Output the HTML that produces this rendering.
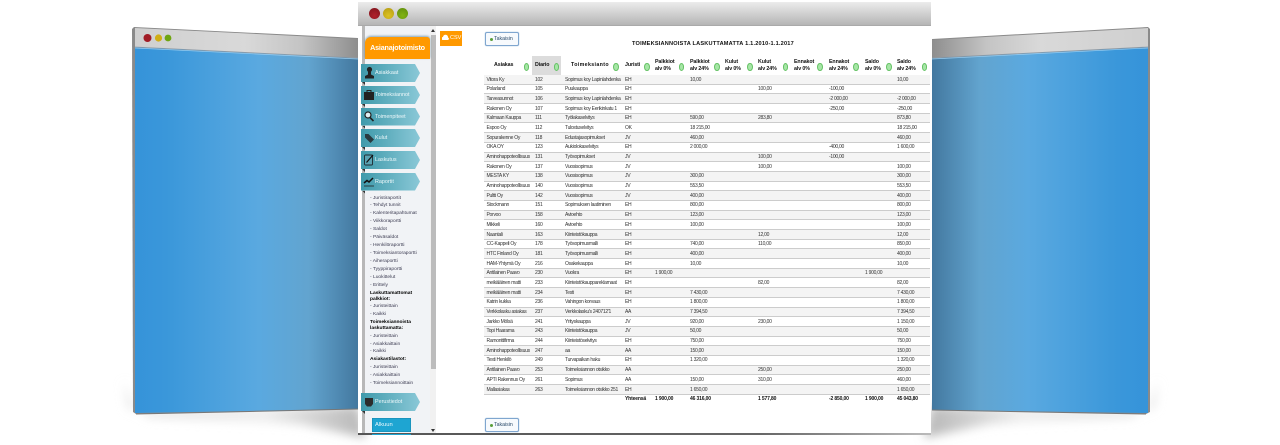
<!DOCTYPE html>
<html><head><meta charset="utf-8"><title>Toimeksiannoista laskuttamatta</title>
<style>
html,body{margin:0;padding:0;background:#fff}
#p{position:relative;width:1280px;height:445px;overflow:hidden;background:#fff;font-family:"Liberation Sans",sans-serif;color:#333}
#bg{position:absolute;left:0;top:0}
.abs{position:absolute}
#main{position:absolute;left:358px;top:2px;width:573px;height:431px;background:#fff}
#head{position:absolute;left:358px;top:2px;width:573px;height:23px;background:linear-gradient(#ececec,#b5b5b5);border-bottom:1px solid #aaa}
#bl{position:absolute;left:358px;top:433px;width:573px;height:2px;background:linear-gradient(90deg,#555,#666 70%,#bbb)}
.dot{position:absolute;border-radius:50%}
#side{position:absolute;left:365px;top:26px;width:65px;height:407px;background:#f1f3f6;overflow:hidden}
#rail{position:absolute;left:362px;top:26px;width:3px;height:407px;background:#b8b8b8}
#track{position:absolute;left:430px;top:26px;width:6px;height:407px;background:#f1f1f1}
#thumb{position:absolute;left:430.5px;top:35px;width:5px;height:334px;background:#bcbcbc}
#org{position:absolute;left:365px;top:37px;width:65px;height:22px;background:#f90;border-radius:6px 3px 0 0;box-shadow:0 -1px 2px rgba(60,110,140,.6);color:#fff;font-weight:bold;font-size:7.2px;letter-spacing:-.2px;line-height:21px;text-align:center}
.tab{position:absolute;left:361px;width:59px;height:18px;background:linear-gradient(90deg,#3f9aab,#8ac8d7);clip-path:polygon(0 0,54px 0,59px 9px,54px 18px,0 18px);color:#eef8fa;font-size:5.4px;line-height:18px;text-indent:14px;filter:blur(.25px)}
.fold{position:absolute;left:362px;width:3px;height:3px;background:#333;clip-path:polygon(0 0,100% 0,100% 100%)}
.ico{position:absolute;left:363px}
.m{position:absolute;left:370px;font-size:4.9px;line-height:6px;color:#3c3c52;white-space:nowrap;filter:blur(.25px)}
.h{position:absolute;left:370px;font-size:4.9px;line-height:6px;font-weight:bold;color:#000;white-space:nowrap;filter:blur(.2px)}
#csv{position:absolute;left:440px;top:30.5px;width:22px;height:15px;background:#f90;color:#fff;font-size:5.5px;line-height:15px;text-indent:10px}
.btn{position:absolute;left:485px;width:32px;height:12px;border:1px solid #7fa6cf;border-radius:2px;background:#f7fafd;box-shadow:0 0 1px #7fa6cf;color:#2a4a6a;font-size:5.2px;line-height:12px;text-indent:8px}
.btn::before{content:"";position:absolute;left:4px;top:4.5px;width:3px;height:3px;border-radius:50%;background:#5a9e3a}
#title{position:absolute;left:632px;top:41px;font-weight:bold;font-size:5.6px;line-height:7px;letter-spacing:.2px;color:#111;white-space:nowrap;filter:blur(.2px)}
.th{position:absolute;font-weight:bold;font-size:5.3px;line-height:7px;color:#111;white-space:nowrap;letter-spacing:-.1px;filter:blur(.2px)}
.ov{position:absolute;top:62.5px;width:3.5px;height:6px;margin-left:.5px;border-radius:50%;background:#a6e6a6;border:.5px solid #66c266}
#t{position:absolute;left:484px;top:75px;width:446px}
.r{position:relative;height:8.7px;border-bottom:1px solid #ccc;background:#fff}
.r:nth-child(odd){background:#f4f4f4}
.r span{position:absolute;top:1.5px;font-size:5px;line-height:6px;letter-spacing:-.28px;color:#333;white-space:nowrap;filter:blur(.25px)}
.a{left:2.5px}.b{left:51px}.c{left:81px}.d{left:141px}.e{left:171px}.f{left:206px}.g{left:241px}.h2{left:274px}.i{left:310px}.j{left:345px}.k{left:381px}.l{left:413px}
#tot{position:absolute;left:484px;top:395px;width:446px;height:8px}
#tot span{position:absolute;top:1px;font-size:5px;line-height:6px;font-weight:bold;letter-spacing:-.15px;color:#111;white-space:nowrap;filter:blur(.2px)}
</style></head><body>
<div id="p">
<svg id="bg" width="1280" height="445" viewBox="0 0 1280 445">
<defs>
<linearGradient id="lb" x1="132" x2="358" y1="0" y2="0" gradientUnits="userSpaceOnUse"><stop offset="0" stop-color="#3593d9"/><stop offset=".15" stop-color="#3a97da"/><stop offset=".56" stop-color="#5aa9e0"/><stop offset=".78" stop-color="#62a4cf"/><stop offset="1" stop-color="#43789f"/></linearGradient>
<linearGradient id="rb" x1="1150" x2="932" y1="0" y2="0" gradientUnits="userSpaceOnUse"><stop offset="0" stop-color="#3593d9"/><stop offset=".15" stop-color="#3a97da"/><stop offset=".56" stop-color="#5aa9e0"/><stop offset=".78" stop-color="#62a4cf"/><stop offset="1" stop-color="#43789f"/></linearGradient>
<linearGradient id="lh" x1="132" x2="358" y1="0" y2="0" gradientUnits="userSpaceOnUse"><stop offset="0" stop-color="#cfcfcf"/><stop offset=".5" stop-color="#d9d9d9"/><stop offset=".75" stop-color="#c4c4c4"/><stop offset="1" stop-color="#8e8e8e"/></linearGradient>
<linearGradient id="rh" x1="1150" x2="932" y1="0" y2="0" gradientUnits="userSpaceOnUse"><stop offset="0" stop-color="#cfcfcf"/><stop offset=".5" stop-color="#d9d9d9"/><stop offset=".75" stop-color="#c4c4c4"/><stop offset="1" stop-color="#8e8e8e"/></linearGradient>
<linearGradient id="sl" x1="125" x2="358" y1="0" y2="0" gradientUnits="userSpaceOnUse"><stop offset="0" stop-color="#ddd"/><stop offset=".6" stop-color="#eee"/><stop offset="1" stop-color="#bbb"/></linearGradient>
<linearGradient id="sr" x1="1157" x2="932" y1="0" y2="0" gradientUnits="userSpaceOnUse"><stop offset="0" stop-color="#ddd"/><stop offset=".6" stop-color="#eee"/><stop offset="1" stop-color="#bbb"/></linearGradient>
<filter id="bl1" x="-20%" y="-50%" width="140%" height="200%"><feGaussianBlur stdDeviation="5"/></filter>
</defs>
<polygon points="124,380 134,412 358,406 366,438 300,424 150,417 128,408" fill="url(#sl)" filter="url(#bl1)"/>
<polygon points="1158,380 1148,412 932,406 924,438 990,424 1130,417 1154,408" fill="url(#sr)" filter="url(#bl1)"/>
<polygon points="132,29 134,27 358,38 358,409 136,414 133,412" fill="#8a8a8a"/>
<polygon points="135,28 358,39 358,58 135,47" fill="url(#lh)"/>
<polygon points="135,47 358,58 358,409 135,413" fill="url(#lb)"/>
<line x1="135" y1="47" x2="358" y2="58" stroke="#8f9aa4" stroke-width=".8"/>
<line x1="135" y1="48" x2="358" y2="59" stroke="#9ccdee" stroke-width=".7"/>
<line x1="136" y1="414" x2="358" y2="409" stroke="#777" stroke-width="1"/>
<circle cx="147.5" cy="38" r="4" fill="#a11c26"/><circle cx="158.5" cy="38" r="3.6" fill="#d0ad14"/><circle cx="168" cy="38" r="3.4" fill="#6fa510"/>
<polygon points="1150,29 1148,27 932,39 932,410 1146,414 1150,412" fill="#8a8a8a"/>
<polygon points="1148,28 932,40 932,58 1148,47" fill="url(#rh)"/>
<polygon points="1148,47 932,58 932,410 1148,413" fill="url(#rb)"/>
<line x1="1148" y1="47" x2="932" y2="58" stroke="#8f9aa4" stroke-width=".8"/>
<line x1="1148" y1="48" x2="932" y2="59" stroke="#9ccdee" stroke-width=".7"/>
<line x1="1146" y1="414" x2="932" y2="410" stroke="#777" stroke-width="1"/>
</svg>

<div id="main"></div>
<div id="head"></div>
<div class="dot" style="left:368.5px;top:7.5px;width:11px;height:11px;background:radial-gradient(circle at 50% 70%,#b0222c,#7e151d)"></div>
<div class="dot" style="left:382.5px;top:7.5px;width:11px;height:11px;background:radial-gradient(circle at 50% 70%,#dcc222,#b39a12)"></div>
<div class="dot" style="left:396.5px;top:7.5px;width:11px;height:11px;background:radial-gradient(circle at 50% 70%,#82b412,#5f8c0c)"></div>
<div id="bl"></div>

<div id="rail"></div>
<div id="side"></div>
<div id="track"></div><div id="thumb"></div>
<div class="abs" style="left:431px;top:29px;border:2px solid transparent;border-top:0;border-bottom:3px solid #333"></div>
<div class="abs" style="left:431px;top:429px;border:2px solid transparent;border-bottom:0;border-top:3px solid #333"></div>
<div id="org">Asianajotoimisto Oy</div>

<div class="tab" style="top:64px">Asiakkaat</div><div class="fold" style="top:82px"></div>
<div class="tab" style="top:86px">Toimeksiannot</div><div class="fold" style="top:104px"></div>
<div class="tab" style="top:107.5px">Toimenpiteet</div><div class="fold" style="top:125.5px"></div>
<div class="tab" style="top:129px">Kulut</div><div class="fold" style="top:147px"></div>
<div class="tab" style="top:151px">Laskutus</div><div class="fold" style="top:169px"></div>
<div class="tab" style="top:172.5px">Raportit</div><div class="fold" style="top:190.5px"></div>
<div class="tab" style="top:393px">Perustiedot</div><div class="fold" style="top:411px"></div>

<svg class="ico" style="top:66px" width="12" height="13" viewBox="0 0 12 13"><circle cx="6.5" cy="3.5" r="2.6" fill="#222"/><path d="M5 5h3v3.500l3 1.500v2.500H2V10l3-1.500z" fill="#222"/></svg>
<svg class="ico" style="top:89px" width="12" height="13" viewBox="0 0 12 13"><path d="M4 3V1.500h4V3" fill="none" stroke="#222"/><rect x="1" y="3" width="10" height="8" fill="#222"/></svg>
<svg class="ico" style="top:110px" width="12" height="13" viewBox="0 0 12 13"><circle cx="5" cy="5" r="3" fill="#dfeef2" stroke="#222" stroke-width="1.200"/><path d="M7 7.500l3.500 3.500" stroke="#222" stroke-width="1.600"/></svg>
<svg class="ico" style="top:132px" width="12" height="13" viewBox="0 0 12 13"><path d="M2 2h3.500l5.500 5.500-3.500 3.500L2 5.500z" fill="#2a3a40"/></svg>
<svg class="ico" style="top:153px" width="12" height="14" viewBox="0 0 12 14"><rect x="1.500" y="2" width="8" height="10" rx="1" fill="#5aa3b3" stroke="#1f2a30" stroke-width=".9"/><path d="M3.500 9.500L10 2" stroke="#111" stroke-width="1.200"/></svg>
<svg class="ico" style="top:175px" width="12" height="13" viewBox="0 0 12 13"><path d="M1 8l3-2.500 2 1.500 4-4" fill="none" stroke="#111" stroke-width="1.500"/><path d="M1 11h10" stroke="#222" stroke-width=".8"/></svg>
<svg class="ico" style="top:396px" width="12" height="13" viewBox="0 0 12 13"><path d="M2 2h8v6l-2 2.500H4L2 8z" fill="#2c2c2c"/></svg>

<div class="m" style="top:195.500px">- Juristiraportit</div>
<div class="m" style="top:203px">- Tehdyt tunnit</div>
<div class="m" style="top:211px">- Kalenteritapahtumat</div>
<div class="m" style="top:219px">- Viikkoraportti</div>
<div class="m" style="top:227px">- Saldot</div>
<div class="m" style="top:235px">- Päiväsaldot</div>
<div class="m" style="top:243px">- Henkilöraportti</div>
<div class="m" style="top:251px">- Toimeksiantoraportti</div>
<div class="m" style="top:259px">- Aiheraportti</div>
<div class="m" style="top:267px">- Tyyppiraportti</div>
<div class="m" style="top:275px">- Luokittelut</div>
<div class="m" style="top:283px">- Erittely</div>
<div class="h" style="top:291px">Laskuttamattomat</div>
<div class="h" style="top:296.500px">palkkiot:</div>
<div class="m" style="top:304px">- Juristeittain</div>
<div class="m" style="top:312px">- Kaikki</div>
<div class="h" style="top:320px">Toimeksiannoista</div>
<div class="h" style="top:325.500px">laskuttamatta:</div>
<div class="m" style="top:333.500px">- Juristeittain</div>
<div class="m" style="top:341.500px">- Asiakkaittain</div>
<div class="m" style="top:349px">- Kaikki</div>
<div class="h" style="top:357px">Asiakastilastot:</div>
<div class="m" style="top:365px">- Juristeittain</div>
<div class="m" style="top:373px">- Asiakkaittain</div>
<div class="m" style="top:381px">- Toimeksiannoittain</div>

<div class="abs" style="left:372px;top:418px;width:39px;height:14px;background:#1ea5d2;box-shadow:inset 0 0 0 .5px #1785ab;color:#e8f7fc;font-size:5.8px;line-height:14px;text-indent:3px">Alkuun</div>
<div class="abs" style="left:372px;top:434px;width:39px;height:1px;background:#1ea5d2"></div>

<div id="csv">CSV</div>
<svg class="abs" style="left:442px;top:34px" width="7" height="7" viewBox="0 0 7 7"><path d="M1 6a1.500 1.500 0 0 1 0-3 2.500 2.500 0 0 1 5 .5 1.300 1.300 0 0 1 0 2.500z" fill="#fff"/></svg>
<div class="btn" style="top:32px">Takaisin</div>
<div class="btn" style="top:418px">Takaisin</div>

<div id="title">TOIMEKSIANNOISTA LASKUTTAMATTA 1.1.2010-1.1.2017</div>

<div class="abs" style="left:532px;top:56px;width:29px;height:19px;background:#dcdcdc"></div>
<div class="th" style="left:494px;top:62px">Asiakas</div>
<div class="th" style="left:535px;top:62px">Diario</div>
<div class="th" style="left:571px;top:62px;letter-spacing:.35px">Toimeksianto</div>
<div class="th" style="left:625px;top:62px">Juristi</div>
<div class="th" style="left:655px;top:59px">Palkkiot<br>alv 0%</div>
<div class="th" style="left:690px;top:59px">Palkkiot<br>alv 24%</div>
<div class="th" style="left:725px;top:59px">Kulut<br>alv 0%</div>
<div class="th" style="left:758px;top:59px">Kulut<br>alv 24%</div>
<div class="th" style="left:794px;top:59px">Ennakot<br>alv 0%</div>
<div class="th" style="left:829px;top:59px">Ennakot<br>alv 24%</div>
<div class="th" style="left:865px;top:59px">Saldo<br>alv 0%</div>
<div class="th" style="left:897px;top:59px">Saldo<br>alv 24%</div>
<div class="ov" style="left:523px"></div><div class="ov" style="left:553px"></div><div class="ov" style="left:612.500px"></div><div class="ov" style="left:643.500px"></div><div class="ov" style="left:678px"></div><div class="ov" style="left:713.500px"></div><div class="ov" style="left:746.500px"></div><div class="ov" style="left:782px"></div><div class="ov" style="left:816.500px"></div><div class="ov" style="left:852.500px"></div><div class="ov" style="left:885.500px"></div><div class="ov" style="left:921px"></div>

<div id="t">
<div class="r"><span class="a">Vitora Ky</span><span class="b">102</span><span class="c">Sopimus koy Lapinlahdenka</span><span class="d">EH</span><span class="f">10,00</span><span class="l">10,00</span></div>
<div class="r"><span class="a">Polarland</span><span class="b">105</span><span class="c">Puukauppa</span><span class="d">EH</span><span class="h2">100,00</span><span class="j">-100,00</span></div>
<div class="r"><span class="a">Tarveasunnot</span><span class="b">106</span><span class="c">Sopimus koy Lapinlahdenka</span><span class="d">EH</span><span class="j">-2 000,00</span><span class="l">-2 000,00</span></div>
<div class="r"><span class="a">Rakonen Oy</span><span class="b">107</span><span class="c">Sopimus koy Eerikinkatu 1</span><span class="d">EH</span><span class="j">-250,00</span><span class="l">-250,00</span></div>
<div class="r"><span class="a">Kalmaan Kauppa</span><span class="b">111</span><span class="c">Työlakaselvitys</span><span class="d">EH</span><span class="f">590,00</span><span class="h2">283,80</span><span class="l">873,80</span></div>
<div class="r"><span class="a">Espoo Oy</span><span class="b">112</span><span class="c">Tulostuselvitys</span><span class="d">OK</span><span class="f">18 215,00</span><span class="l">18 215,00</span></div>
<div class="r"><span class="a">Sopurakenne Oy</span><span class="b">118</span><span class="c">Edustajasopimukset</span><span class="d">JV</span><span class="f">460,00</span><span class="l">460,00</span></div>
<div class="r"><span class="a">OKA OY</span><span class="b">123</span><span class="c">Aukiolokaselvitys</span><span class="d">EH</span><span class="f">2 000,00</span><span class="j">-400,00</span><span class="l">1 600,00</span></div>
<div class="r"><span class="a">Aminohappoteollisuus</span><span class="b">131</span><span class="c">Työsopimukset</span><span class="d">JV</span><span class="h2">100,00</span><span class="j">-100,00</span></div>
<div class="r"><span class="a">Rakonen Oy</span><span class="b">137</span><span class="c">Vuosisopimus</span><span class="d">JV</span><span class="h2">100,00</span><span class="l">100,00</span></div>
<div class="r"><span class="a">MESTA KY</span><span class="b">138</span><span class="c">Vuosisopimus</span><span class="d">JV</span><span class="f">300,00</span><span class="l">300,00</span></div>
<div class="r"><span class="a">Aminohappoteollisuus</span><span class="b">140</span><span class="c">Vuosisopimus</span><span class="d">JV</span><span class="f">553,50</span><span class="l">553,50</span></div>
<div class="r"><span class="a">Pultti Oy</span><span class="b">142</span><span class="c">Vuosisopimus</span><span class="d">JV</span><span class="f">400,00</span><span class="l">400,00</span></div>
<div class="r"><span class="a">Stockmann</span><span class="b">151</span><span class="c">Sopimuksen laatiminen</span><span class="d">EH</span><span class="f">800,00</span><span class="l">800,00</span></div>
<div class="r"><span class="a">Porvoo</span><span class="b">158</span><span class="c">Avioehto</span><span class="d">EH</span><span class="f">123,00</span><span class="l">123,00</span></div>
<div class="r"><span class="a">Mikkeli</span><span class="b">160</span><span class="c">Avioehto</span><span class="d">EH</span><span class="f">100,00</span><span class="l">100,00</span></div>
<div class="r"><span class="a">Naantali</span><span class="b">163</span><span class="c">Kiinteistökauppa</span><span class="d">EH</span><span class="h2">12,00</span><span class="l">12,00</span></div>
<div class="r"><span class="a">CC-Kappeli Oy</span><span class="b">178</span><span class="c">Työsopimusmalli</span><span class="d">EH</span><span class="f">740,00</span><span class="h2">110,00</span><span class="l">850,00</span></div>
<div class="r"><span class="a">HTC Finland Oy</span><span class="b">181</span><span class="c">Työsopimusmalli</span><span class="d">EH</span><span class="f">400,00</span><span class="l">400,00</span></div>
<div class="r"><span class="a">HAM-Yhtymä Oy</span><span class="b">216</span><span class="c">Osakekauppa</span><span class="d">EH</span><span class="f">10,00</span><span class="l">10,00</span></div>
<div class="r"><span class="a">Antilainen Paavo</span><span class="b">230</span><span class="c">Vuokra</span><span class="d">EH</span><span class="e">1 900,00</span><span class="k">1 900,00</span></div>
<div class="r"><span class="a">meikäläinen matti</span><span class="b">233</span><span class="c">Kiinteistökauppareklamaat</span><span class="d">EH</span><span class="h2">82,00</span><span class="l">82,00</span></div>
<div class="r"><span class="a">meikäläinen matti</span><span class="b">234</span><span class="c">Testi</span><span class="d">EH</span><span class="f">7 430,00</span><span class="l">7 430,00</span></div>
<div class="r"><span class="a">Katrin kukka</span><span class="b">236</span><span class="c">Vahingon korvaus</span><span class="d">EH</span><span class="f">1 800,00</span><span class="l">1 800,00</span></div>
<div class="r"><span class="a">Verkkolasku asiakas</span><span class="b">237</span><span class="c">Verkkolasku's 240712'1</span><span class="d">AA</span><span class="f">7 394,50</span><span class="l">7 394,50</span></div>
<div class="r"><span class="a">Jarkko Mölsä</span><span class="b">241</span><span class="c">Yrityskauppa</span><span class="d">JV</span><span class="f">920,00</span><span class="h2">230,00</span><span class="l">1 150,00</span></div>
<div class="r"><span class="a">Topi Haarama</span><span class="b">243</span><span class="c">Kiinteistökauppa</span><span class="d">JV</span><span class="f">50,00</span><span class="l">50,00</span></div>
<div class="r"><span class="a">Ramonttifirma</span><span class="b">244</span><span class="c">Kiinteistöselvitys</span><span class="d">EH</span><span class="f">750,00</span><span class="l">750,00</span></div>
<div class="r"><span class="a">Aminohappoteollisuus</span><span class="b">247</span><span class="c">aa</span><span class="d">AA</span><span class="f">150,00</span><span class="l">150,00</span></div>
<div class="r"><span class="a">Testi Henkilö</span><span class="b">249</span><span class="c">Turvapaikan haku</span><span class="d">EH</span><span class="f">1 320,00</span><span class="l">1 320,00</span></div>
<div class="r"><span class="a">Antilainen Paavo</span><span class="b">253</span><span class="c">Toimeksiannon otsikko</span><span class="d">AA</span><span class="h2">250,00</span><span class="l">250,00</span></div>
<div class="r"><span class="a">APTI Rakennus Oy</span><span class="b">261</span><span class="c">Sopimus</span><span class="d">AA</span><span class="f">150,00</span><span class="h2">310,00</span><span class="l">460,00</span></div>
<div class="r"><span class="a">Mallasiakas</span><span class="b">263</span><span class="c">Toimeksiannon otsikko 251</span><span class="d">EH</span><span class="f">1 650,00</span><span class="l">1 650,00</span></div>
</div>
<div id="tot"><span class="d">Yhteensä</span><span class="e">1 900,00</span><span class="f">46 316,00</span><span class="h2">1 577,80</span><span class="j">-2 850,00</span><span class="k">1 900,00</span><span class="l">45 043,80</span></div>
</div>
</body></html>
